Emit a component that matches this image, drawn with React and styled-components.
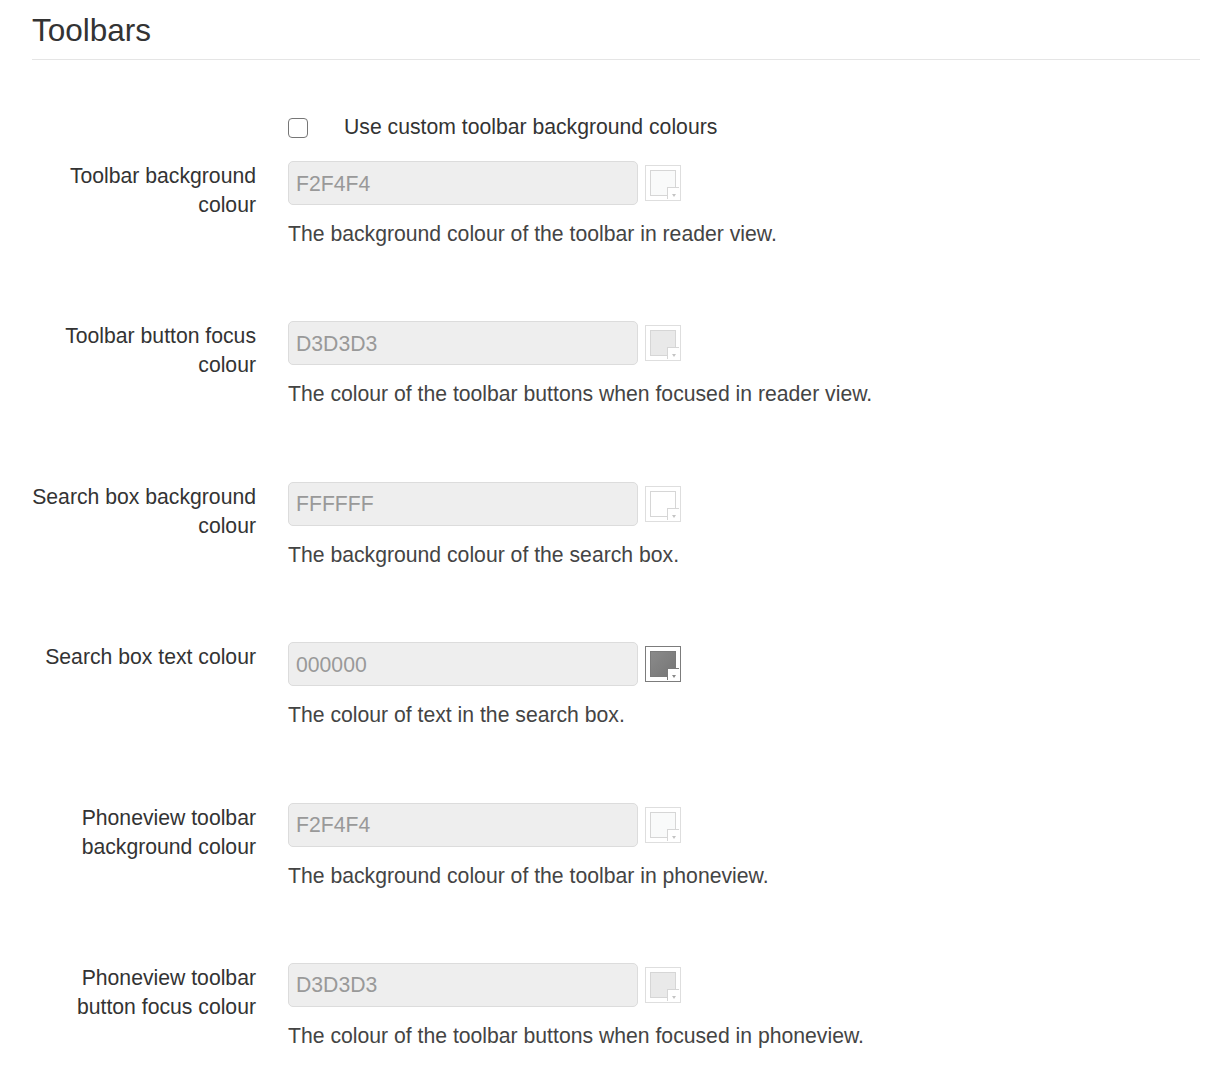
import styled, { createGlobalStyle } from "styled-components";

const GlobalStyle = createGlobalStyle`
  html, body {
    margin: 0;
    padding: 0;
    background: #fff;
  }
  body {
    font-family: "Liberation Sans", Arial, Helvetica, sans-serif;
    color: #333;
  }
`;

const Page = styled.div`
  width: 1168px;
  padding: 12px 26px 0 32px;
`;

const Heading = styled.h3`
  margin: 0;
  padding-bottom: 10px;
  font-size: 31.5px;
  line-height: 37px;
  font-weight: 400;
  color: #333;
  border-bottom: 1px solid #e5e5e5;
`;

const Form = styled.div`
  display: flex;
  flex-direction: column;
  padding-top: 52px;
`;

const Row = styled.div`
  display: grid;
  grid-template-columns: 224px 1fr;
  column-gap: 32px;
  margin-bottom: ${(p) => p.$gap || 73.4}px;
  font-size: 21.2px;
  line-height: 29px;
`;

const Label = styled.div`
  text-align: right;
  color: #333;
`;

const Field = styled.div`
  display: flex;
  flex-direction: column;
`;

const CheckRow = styled.label`
  display: flex;
  align-items: center;
  gap: 36px;
  color: #333;
`;

const Box = styled.span`
  width: 20px;
  height: 20px;
  box-sizing: border-box;
  border: 1.5px solid #767676;
  border-radius: 4px;
  background: #fff;
  margin-top: 3px;
`;

const InputLine = styled.div`
  display: flex;
  align-items: center;
  gap: 7px;
`;

const Input = styled.div`
  width: 350px;
  height: 44px;
  box-sizing: border-box;
  padding: 0 7px;
  display: flex;
  align-items: center;
  background: #eee;
  border: 1px solid #dcdcdc;
  border-radius: 5px;
  color: #999;
`;

const Swatch = styled.div`
  position: relative;
  width: 36px;
  height: 36px;
  box-sizing: border-box;
  border: 1px solid ${(p) => (p.$dark ? "#7c7c7c" : "#dedede")};
  background: #fff;
  padding: 4px;
`;

const SwatchFill = styled.div`
  width: 100%;
  height: 100%;
  box-sizing: border-box;
  border: 1px solid ${(p) => (p.$dark ? "#7a7a7a" : "#d6d6d6")};
  background: ${(p) => (p.$dark ? "linear-gradient(135deg, #8a8a8a, #767676)" : p.$fill)};
`;

const Notch = styled.div`
  position: absolute;
  right: 1px;
  bottom: 1px;
  width: 12px;
  height: 12px;
  box-sizing: border-box;
  background: #fff;
  border-top: 1px solid ${(p) => (p.$dark ? "#7a7a7a" : "#d6d6d6")};
  border-left: 1px solid ${(p) => (p.$dark ? "#7a7a7a" : "#d6d6d6")};
  display: flex;
  align-items: flex-end;
  justify-content: center;
  padding-bottom: 2px;
`;

const Arrow = styled.span`
  width: 0;
  height: 0;
  border-left: 2.5px solid transparent;
  border-right: 2.5px solid transparent;
  border-top: 3px solid ${(p) => (p.$dark ? "#888" : "#c4c4c4")};
`;

const Help = styled.div`
  margin-top: 14px;
  color: #444;
`;

const fade = (hex) => {
  const n = parseInt(hex, 16);
  const mix = (v) => Math.round(v + (255 - v) * 0.5);
  const r = mix((n >> 16) & 255);
  const g = mix((n >> 8) & 255);
  const b = mix(n & 255);
  return `rgb(${r}, ${g}, ${b})`;
};

const settings = [
  {
    label: "Toolbar background colour",
    value: "F2F4F4",
    help: "The background colour of the toolbar in reader view.",
  },
  {
    label: "Toolbar button focus colour",
    value: "D3D3D3",
    help: "The colour of the toolbar buttons when focused in reader view.",
  },
  {
    label: "Search box background colour",
    value: "FFFFFF",
    help: "The background colour of the search box.",
  },
  {
    label: "Search box text colour",
    value: "000000",
    help: "The colour of text in the search box.",
  },
  {
    label: "Phoneview toolbar background colour",
    value: "F2F4F4",
    help: "The background colour of the toolbar in phoneview.",
  },
  {
    label: "Phoneview toolbar button focus colour",
    value: "D3D3D3",
    help: "The colour of the toolbar buttons when focused in phoneview.",
  },
];

function ColourSwatch({ value }) {
  const dark = parseInt(value, 16) < 0x404040;
  return (
    <Swatch $dark={dark}>
      <SwatchFill $dark={dark} $fill={fade(value)} />
      <Notch $dark={dark}>
        <Arrow $dark={dark} />
      </Notch>
    </Swatch>
  );
}

export default function App() {
  return (
    <>
      <GlobalStyle />
      <Page>
        <Heading>Toolbars</Heading>
        <Form>
          <Row $gap={20}>
            <span />
            <CheckRow>
              <Box />
              Use custom toolbar background colours
            </CheckRow>
          </Row>
          {settings.map((s) => (
            <Row key={s.label}>
              <Label>{s.label}</Label>
              <Field>
                <InputLine>
                  <Input>{s.value}</Input>
                  <ColourSwatch value={s.value} />
                </InputLine>
                <Help>{s.help}</Help>
              </Field>
            </Row>
          ))}
        </Form>
      </Page>
    </>
  );
}
